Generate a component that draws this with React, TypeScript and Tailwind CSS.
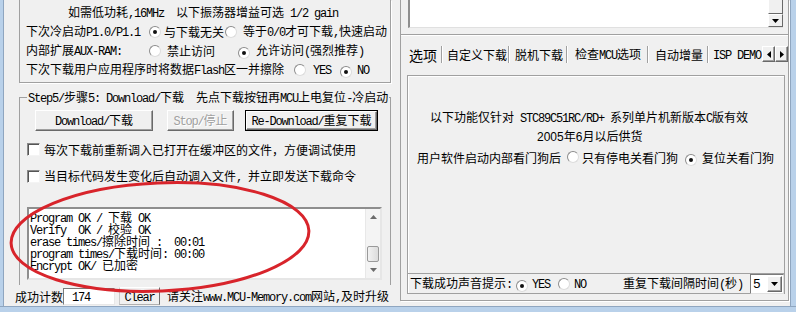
import React from "react";

const CJK = "font-['Noto_Sans_CJK_SC',sans-serif] text-[12px]";
const ASC = "font-['Liberation_Mono',monospace] text-[12px] tracking-[-1.2px]";

function T({ s, cjk = CJK, asc = ASC }: { s: string; cjk?: string; asc?: string }) {
  const parts: { t: string; c: boolean }[] = [];
  for (const ch of s) {
    const c = ch.charCodeAt(0) > 0x2000;
    const last = parts[parts.length - 1];
    if (last && last.c === c) last.t += ch;
    else parts.push({ t: ch, c });
  }
  return (
    <span className="whitespace-pre">
      {parts.map((p, i) => (
        <span key={i} className={`inline-block leading-[inherit] ${p.c ? cjk : asc}`}>
          {p.t}
        </span>
      ))}
    </span>
  );
}

function Radio({ on }: { on?: boolean }) {
  return (
    <span className="inline-flex w-[12px] h-[12px] shrink-0 items-center justify-center rounded-full border border-[#8c8c8c] border-r-[#dcdcdc] border-b-[#dcdcdc] bg-white">
      {on && <span className="w-[4px] h-[4px] rounded-full bg-[#111]" />}
    </span>
  );
}

function Check() {
  return (
    <span className="inline-block w-[13px] h-[13px] shrink-0 bg-white border border-[#8a8a8a] border-r-[#f4f4f4] border-b-[#f4f4f4] shadow-[inset_1px_1px_0_#555]" />
  );
}

function Arrow({ dir, color = "#4a4a4a" }: { dir: "up" | "down" | "left" | "right"; color?: string }) {
  const pts =
    dir === "up" ? "0,4 3.5,0 7,4" : dir === "down" ? "0,0 7,0 3.5,4" : dir === "left" ? "4,0 4,7 0,3.5" : "0,0 0,7 4,3.5";
  const w = dir === "up" || dir === "down" ? 7 : 4;
  const h = dir === "up" || dir === "down" ? 4 : 7;
  return (
    <svg width={w} height={h} viewBox={`0 0 ${w} ${h}`}>
      <polygon points={pts} fill={color} />
    </svg>
  );
}

const btn3d =
  "flex items-center justify-center bg-[#f0f0f0] border border-t-white border-l-white border-r-[#696969] border-b-[#696969] shadow-[inset_-1px_-1px_0_#a0a0a0]";

function LeftPanel() {
  return (
    <div className="w-[392px] flex flex-col">
      {/* top group box */}
      <div className="ml-[15px] w-[372px] h-[83px] border-x border-b border-[#a0a0a0] shadow-[1px_1px_0_#fff] pt-[3px] leading-[14px]">
        <div className="h-[19px] flex items-center pl-[48px]">
          <T s="如需低功耗,16MHz  以下振荡器增益可选 1/2 gain" />
        </div>
        <div className="h-[19px] flex items-center pl-[6px]">
          <span className="w-[123px] shrink-0">
            <T s="下次冷启动P1.0/P1.1" />
          </span>
          <Radio on />
          <span className="ml-[3px]">
            <T s="与下载无关" />
          </span>
          <span className="ml-[1px]">
            <Radio />
          </span>
          <span className="ml-[6px]">
            <T s="等于0/0才可下载,快速启动" />
          </span>
        </div>
        <div className="h-[19px] flex items-center pl-[6px]">
          <span className="w-[123px] shrink-0">
            <T s="内部扩展AUX-RAM:" />
          </span>
          <Radio />
          <span className="ml-[6px]">
            <T s="禁止访问" />
          </span>
          <span className="ml-[23px]">
            <Radio on />
          </span>
          <span className="ml-[6px]">
            <T s="允许访问(强烈推荐)" />
          </span>
        </div>
        <div className="h-[19px] flex items-center pl-[6px]">
          <T s="下次下载用户应用程序时将数据Flash区一并擦除" />
          <span className="ml-[10px]">
            <Radio />
          </span>
          <span className="ml-[7px]">
            <T s="YES" />
          </span>
          <span className="ml-[9px]">
            <Radio on />
          </span>
          <span className="ml-[5px]">
            <T s="NO" />
          </span>
        </div>
      </div>

      {/* step5 group */}
      <fieldset className="ml-[15px] mt-[7px] w-[372px] h-[195px] border border-b-0 border-[#a0a0a0] leading-[12px]">
        <legend className="ml-[7px] px-[1px] leading-[12px]">
          <T s="Step5/步骤5: Download/下载  先点下载按钮再MCU上电复位-冷启动" />
        </legend>
        <div className="flex mt-[5px] ml-[15px] leading-[14px]">
          <div className={`${btn3d} w-[118px] h-[21px]`}>
            <T s="Download/下载" />
          </div>
          <div className={`${btn3d} ml-[14px] w-[67px] h-[21px] text-[#a0a0a0] [text-shadow:1px_1px_0_#fff]`}>
            <T s="Stop/停止" />
          </div>
          <div className="ml-[11px] w-[133px] h-[21px] border border-black flex">
            <div className={`${btn3d} flex-1`}>
              <T s="Re-Download/重复下载" />
            </div>
          </div>
        </div>
        <div className="flex items-center mt-[12px] ml-[7px] h-[13px] leading-[14px]">
          <Check />
          <span className="ml-[4px]">
            <T s="每次下载前重新调入已打开在缓冲区的文件，方便调试使用" />
          </span>
        </div>
        <div className="flex items-center mt-[14px] ml-[7px] h-[13px] leading-[14px]">
          <Check />
          <span className="ml-[4px]">
            <T s="当目标代码发生变化后自动调入文件, 并立即发送下载命令" />
          </span>
        </div>
        {/* log box */}
        <div className="mt-[24px] ml-[7px] w-[355px] h-[73px] flex bg-white border-2 border-t-[#8e8e8e] border-l-[#8e8e8e] border-r-[#e6e6e6] border-b-[#e6e6e6]">
          <div className="flex-1 pl-[1px] pt-[2px] leading-[12px]">
            {[
              "Program OK / 下载 OK",
              "Verify  OK / 校验 OK",
              "erase times/擦除时间 :  00:01",
              "program times/下载时间: 00:00",
              "Encrypt OK/ 已加密",
            ].map((l, i) => (
              <div key={i} className="h-[12px] leading-[12px] flex items-center">
                <T s={l} />
              </div>
            ))}
          </div>
          <div className="w-[15px] flex flex-col bg-[#f4f4f4] border-l border-[#e8e8e8]">
            <div className="h-[16px] flex items-center justify-center">
              <Arrow dir="up" color="#6b6b6b" />
            </div>
            <div className="h-[21px]" />
            <div className="h-[16px] mx-[1px] rounded-[2px] border border-[#9a9a9a] bg-gradient-to-r from-[#f2f2f2] to-[#dcdcdc]" />
            <div className="flex-1" />
            <div className="h-[16px] flex items-center justify-center">
              <Arrow dir="down" color="#6b6b6b" />
            </div>
          </div>
        </div>
      </fieldset>

      {/* status row */}
      <div className="mt-[2px] h-[18px] flex items-center leading-[14px]">
        <span className="ml-[11px]">
          <T s="成功计数" />
        </span>
        <div className="w-[52px] h-[17px] bg-white border border-[#7a7a7a] border-r-[#e8e8e8] border-b-[#e8e8e8] flex items-center pl-[8px]">
          <T s="174" />
        </div>
        <div className="ml-[4px] w-[41px] h-[18px] flex items-center justify-center border border-[#b0b0b0] border-t-white border-l-[#c8c8c8] border-r-[#6e6e6e]">
          <T s="Clear" />
        </div>
        <span className="ml-[7px]">
          <T s="请关注www.MCU-Memory.com网站,及时升级" />
        </span>
      </div>
    </div>
  );
}

function RightPanel() {
  const sep = <span className="w-[2px] h-[17px] shrink-0 border-l border-[#a0a0a0] border-r border-r-white" />;
  return (
    <div className="w-[394px] flex flex-col">
      {/* top frame */}
      <div className="ml-[4px] w-[389px] h-[35px] shrink-0 border-x border-b border-[#a0a0a0] shadow-[1px_1px_0_#fff] pl-[7px]">
        <div className="w-[375px] h-[28px] flex justify-end bg-white border-l-2 border-b border-[#8e8e8e] border-b-[#e0e0e0]">
          <div className="w-[15px] flex flex-col bg-[#f0f0f0]">
            <div className="flex-1 border border-t-0 border-l-white border-r-[#696969] border-b-[#696969] bg-[#f0f0f0]" />
            <div className="h-[13px] flex items-center justify-center border border-t-white border-l-white border-r-[#696969] border-b-[#696969] bg-[#f0f0f0]">
              <Arrow dir="down" color="#000" />
            </div>
          </div>
        </div>
      </div>

      {/* tab frame */}
      <div className="ml-[4px] w-[389px] h-[266px] border-x border-b border-[#a0a0a0] shadow-[1px_1px_0_#fff]">
        <div className="relative mt-[11px] ml-[7px] w-[380px] h-[17px] flex items-center leading-[14px]">
          <span className="w-[33px] shrink-0 pl-[1px]">
            <T s="选项" cjk="font-['Noto_Sans_CJK_SC',sans-serif] text-[14px]" />
          </span>
          {sep}
          <span className="w-[65px] shrink-0 pl-[4px]">
            <T s="自定义下载" />
          </span>
          {sep}
          <span className="w-[56px] shrink-0 pl-[5px]">
            <T s="脱机下载" />
          </span>
          {sep}
          <span className="w-[79px] shrink-0 pl-[7px]">
            <T s="检查MCU选项" />
          </span>
          {sep}
          <span className="w-[58px] shrink-0 pl-[6px]">
            <T s="自动增量" />
          </span>
          {sep}
          <span className="shrink-0 pl-[4px]">
            <T s="ISP DEMO" />
          </span>
          <div className="absolute right-0 top-[0px] flex h-[16px] bg-[#f0f0f0]">
            <div className={`${btn3d} w-[13px]`}>
              <Arrow dir="left" color="#000" />
            </div>
            <div className={`${btn3d} w-[13px]`}>
              <Arrow dir="right" color="#000" />
            </div>
          </div>
        </div>
        <div className="mt-[12px] ml-[6px] w-[378px] h-[219px] border border-[#a0a0a0] shadow-[inset_1px_1px_0_#fff] flex flex-col leading-[14px]">
          <div className="mt-[34px] h-[14px] flex items-center pl-[22px]">
            <T s="以下功能仅针对 STC89C51RC/RD+ 系列单片机新版本C版有效" />
          </div>
          <div className="mt-[5px] h-[14px] flex items-center pl-[129px]">
            <T s="2005年6月以后供货" asc="font-['Liberation_Sans',sans-serif] text-[12px]" />
          </div>
          <div className="mt-[7px] h-[14px] flex items-center pl-[9px]">
            <T s="用户软件启动内部看门狗后" />
            <span className="ml-[6px]">
              <Radio />
            </span>
            <span className="ml-[3px]">
              <T s="只有停电关看门狗" />
            </span>
            <span className="ml-[7px]">
              <Radio on />
            </span>
            <span className="ml-[5px]">
              <T s="复位关看门狗" />
            </span>
          </div>
          <div className="flex-1" />
          <div className="h-[20px] border-t border-[#a0a0a0] flex items-center pl-[2px]">
            <T s="下载成功声音提示:" />
            <span className="ml-[4px]">
              <Radio on />
            </span>
            <span className="ml-[4px]">
              <T s="YES" />
            </span>
            <span className="ml-[8px]">
              <Radio />
            </span>
            <span className="ml-[4px]">
              <T s="NO" />
            </span>
            <span className="ml-[37px]">
              <T s="重复下载间隔时间(秒)" />
            </span>
            <div className="ml-[7px] w-[35px] h-[20px] flex items-center bg-white border border-[#7a7a7a] border-r-[#e0e0e0] border-b-[#e0e0e0]">
              <span className="pl-[2px] flex-1 font-['Liberation_Sans',sans-serif] text-[13px]">5</span>
              <div className={`${btn3d} w-[15px] h-[16px] mr-[1px]`}>
                <Arrow dir="down" color="#000" />
              </div>
            </div>
          </div>
        </div>
      </div>
    </div>
  );
}

export default function App() {
  return (
    <div className="relative w-[796px] h-[312px] overflow-hidden bg-[#f0f0f0] text-black flex flex-col">
      <div className="flex h-[306px]">
        <div className="w-[4px] bg-[#b9d1ea] border-r border-[#8fa6c0]" />
        <LeftPanel />
        <RightPanel />
        <div className="flex-1 bg-[#b9d1ea] border-l border-[#8fa6c0]" />
      </div>
      <div className="flex-1 bg-[#b9d1ea] border-t border-[#8fa6c0]" />
      <svg className="absolute left-0 top-0 pointer-events-none" width="796" height="312">
        <ellipse
          cx="160"
          cy="237"
          rx="149"
          ry="54"
          transform="rotate(-2.5 160 237)"
          fill="none"
          stroke="#d8242b"
          strokeWidth="3"
        />
      </svg>
    </div>
  );
}
